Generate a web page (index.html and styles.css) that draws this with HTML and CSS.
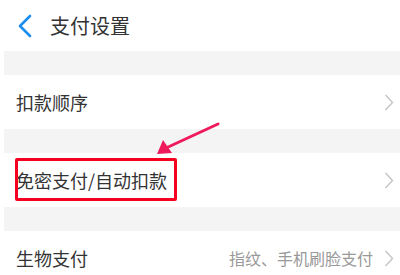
FILE: index.html
```html
<!DOCTYPE html>
<html>
<head>
<meta charset="utf-8">
<link rel="stylesheet" href="styles.css">
</head>
<body>
<div class="page">
  <div class="header">
    <svg class="back" width="16" height="24" viewBox="0 0 16 24"><path d="M13 2 L3 12 L13 22" fill="none" stroke="#1b8cf0" stroke-width="2.6" stroke-linecap="round" stroke-linejoin="round"/></svg>
    <span class="title">支付设置</span>
  </div>
  <div class="gap"></div>
  <div class="row">
    <span class="label">扣款顺序</span>
    <svg class="chev" width="10" height="17" viewBox="0 0 10 17"><path d="M1.5 1 L8.5 8.5 L1.5 16" fill="none" stroke="#c4c4c4" stroke-width="1.4"/></svg>
  </div>
  <div class="gap"></div>
  <div class="row">
    <span class="label">免密支付/自动扣款</span>
    <svg class="chev" width="10" height="17" viewBox="0 0 10 17"><path d="M1.5 1 L8.5 8.5 L1.5 16" fill="none" stroke="#c4c4c4" stroke-width="1.4"/></svg>
    <div class="highlight"></div>
  </div>
  <div class="gap"></div>
  <div class="row">
    <span class="label">生物支付</span>
    <span class="value">指纹、手机刷脸支付</span>
    <svg class="chev" width="10" height="17" viewBox="0 0 10 17"><path d="M1.5 1 L8.5 8.5 L1.5 16" fill="none" stroke="#c4c4c4" stroke-width="1.4"/></svg>
  </div>
  <svg class="arrow" width="400" height="275" viewBox="0 0 400 275">
    <line x1="218" y1="124" x2="166" y2="148" stroke="#ee1a5c" stroke-width="3" stroke-linecap="round"/>
    <polygon points="157,154 163,140 172,153" fill="#ee1a5c"/>
  </svg>
</div>
</body>
</html>
```
FILE: styles.css
```css
html, body {
  margin: 0;
  padding: 0;
  background: #fff;
}
.page {
  position: relative;
  width: 400px;
  height: 275px;
  overflow: hidden;
  font-family: "Noto Sans CJK SC", "Noto Sans", sans-serif;
  color: #333;
}
.header {
  height: 51px;
  display: flex;
  align-items: center;
  padding-left: 17px;
}
.back {
  display: block;
}
.title {
  margin-left: 17px;
  font-size: 20px;
  color: #333;
}
.gap {
  height: 24px;
  margin-left: 4px;
  background: #f4f4f4;
}
.row {
  position: relative;
  height: 54px;
  display: flex;
  align-items: center;
  padding-left: 16px;
  padding-right: 6px;
}
.label {
  font-size: 18px;
  flex: 1;
}
.value {
  font-size: 16px;
  color: #999;
  margin-right: 11px;
}
.chev {
  display: block;
}
.highlight {
  position: absolute;
  left: 15px;
  top: 5px;
  width: 156px;
  height: 37px;
  border: 3px solid #f5001e;
  border-radius: 2px;
}
.arrow {
  position: absolute;
  left: 0;
  top: 0;
}
```
